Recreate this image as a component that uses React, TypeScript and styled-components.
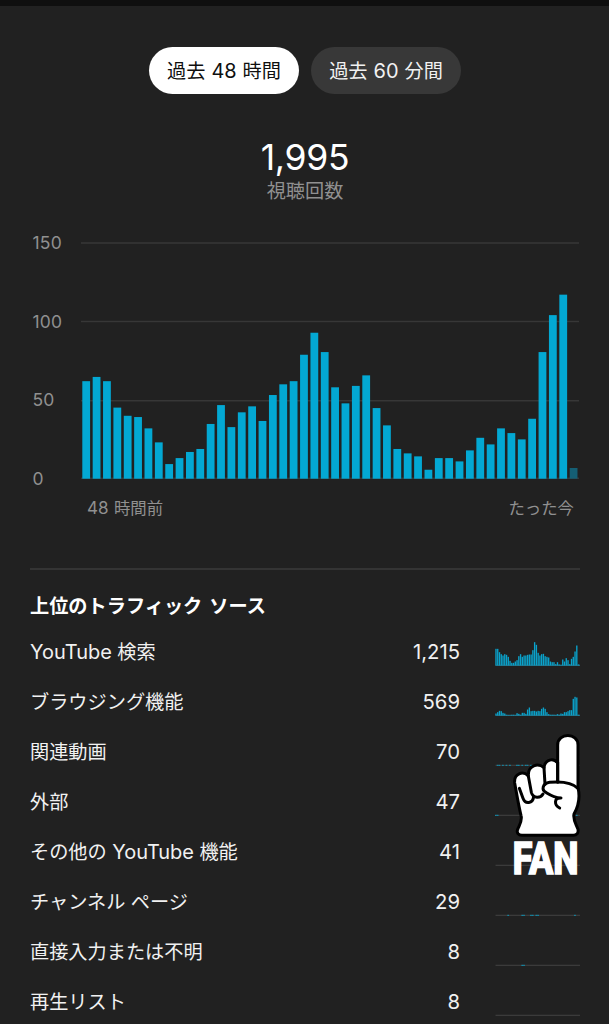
import React from 'react';
import styled, { createGlobalStyle } from 'styled-components';

const GlobalStyle = createGlobalStyle`
  * { box-sizing: border-box; }
  body {
    margin: 0;
    background: #212121;
    color: #f1f1f1;
    font-family: Inter, "Noto Sans CJK JP", sans-serif;
  }
`;

const Screen = styled.main`
  position: relative;
  height: 1024px;
  overflow: hidden;
  border-top: 6px solid #0f0f0f;
  padding: 41px 29px 0 30px;
`;

const Latin = styled.span`
  font-size: 1.04em;
  line-height: 1;
`;

const Tabs = styled.div`
  display: flex;
  justify-content: center;
  gap: 12px;
`;

const Tab = styled.button<{ $active?: boolean }>`
  width: 150px;
  height: 47px;
  padding: 0;
  border: 0;
  border-radius: 24px;
  background: ${(p) => (p.$active ? '#fff' : '#383838')};
  color: ${(p) => (p.$active ? '#0f0f0f' : '#f1f1f1')};
  font: 400 19.2px/48px Inter, "Noto Sans CJK JP", sans-serif;
  word-spacing: 0.6px;
  white-space: nowrap;
`;

const Summary = styled.section`
  display: flex;
  flex-direction: column;
  align-items: center;
  padding-top: 44px;
`;

const Total = styled.div`
  font-size: 35.5px;
  line-height: 40px;
  letter-spacing: -0.3px;
  color: #fff;
`;

const TotalLabel = styled.div`
  font-size: 19.2px;
  line-height: 26px;
  color: #909090;
`;

const ChartArea = styled.section`
  display: grid;
  grid-template-columns: 51px 498px;
  padding-top: 27px;
`;

const Axis = styled.div`
  display: flex;
  flex-direction: column;
  justify-content: space-between;
  height: 260px;
  padding-left: 2.5px;
  font-size: 17.5px;
  line-height: 24px;
  letter-spacing: 0.2px;
  color: #909090;
`;

const Plot = styled.svg`
  display: block;
  margin-top: 10px;
`;

const Times = styled.div`
  grid-column: 2;
  display: flex;
  justify-content: space-between;
  padding: 4px 5px 0 6px;
  font-size: 16.4px;
  line-height: 26px;
  word-spacing: 0.8px;
  color: #909090;
`;

const Sources = styled.section`
  margin-top: 47px;
  border-top: 2px solid #343434;
`;

const Heading = styled.h2`
  margin: 0;
  padding-top: 22px;
  font-size: 19.2px;
  line-height: 28px;
  font-weight: 700;
  word-spacing: 2.4px;
  color: #fff;
`;

const List = styled.div`
  padding-top: 10px;
`;

const Row = styled.div`
  display: grid;
  grid-template-columns: 1fr 120px 120px;
  height: 50px;
  padding-top: 7px;
  font-size: 19.2px;
  line-height: 30px;
`;

const Name = styled.span`
  white-space: nowrap;
`;

const Count = styled.span`
  font-size: 20.3px;
  text-align: right;
`;

const Spark = styled.svg`
  justify-self: end;
  margin-top: 2px;
`;

const Sticker = styled.svg`
  position: absolute;
  left: 485px;
  top: 719px;
`;

const views = [
  62, 64.7, 62, 45.2, 40, 39.2, 32, 23.1, 9.3, 13.1, 17, 18.9, 34.8, 46.8, 32.8, 42.2, 46,
  36.7, 53.2, 60, 62, 78.8, 92.8, 80.5, 58.1, 47.9, 59, 65.7, 44.9, 33.9, 18.9, 16.1, 14.2,
  5.7, 13.1, 13.1, 11, 18, 26, 21.8, 32, 29, 25, 38.1, 80.5, 104, 117, 6.8,
];

const search = [
  50, 50, 40, 34, 30, 34, 32, 26, 14, 8, 8, 12, 16, 28, 34, 26, 30, 30, 32, 33, 33, 46, 70, 62,
  38, 30, 34, 35, 28, 26, 24, 12, 10, 10, 4, 10, 3, 2, 18, 12, 22, 16, 4, 20, 26, 42, 60, 3,
];
const browse = [
  6, 10, 14, 13, 8, 6, 2, 1, 1, 2, 2, 1, 7, 5, 2, 8, 8, 5, 18, 24, 13, 14, 14, 12, 14, 13, 20,
  24, 20, 10, 4, 2, 2, 2, 1, 4, 2, 6, 5, 10, 10, 13, 16, 16, 50, 56, 54, 2,
];

type Source = { name: React.ReactNode; count: string; bars?: number[]; marks?: number[] };

const sources: Source[] = [
  { name: <><Latin>YouTube</Latin> 検索</>, count: '1,215', bars: search },
  { name: 'ブラウジング機能', count: '569', bars: browse },
  { name: '関連動画', count: '70', marks: [1, 2, 4, 6, 8, 12, 13, 15, 17, 18, 20] },
  { name: '外部', count: '47', marks: [0, 1, 46] },
  { name: <>その他の <Latin>YouTube</Latin> 機能</>, count: '41' },
  { name: 'チャンネル ページ', count: '29', marks: [7, 15, 16, 20, 21, 23, 24, 45] },
  { name: '直接入力または不明', count: '8', marks: [15, 16] },
  { name: '再生リスト', count: '8' },
];

function Sparkline({ bars = [], marks = [] }: { bars?: number[]; marks?: number[] }) {
  return (
    <Spark width="85" height="28" viewBox="0 0 85 28">
      <rect x="0.5" y="25.7" width="84.5" height="1.3" fill={bars.length ? '#2b6575' : '#3b3b3b'} />
      {bars.map((v, i) => (
        <rect key={i} x={0.3 + i * 1.757} y={26.5 - v / 3} width="1.36" height={v / 3} fill="#0aa2cb" />
      ))}
      {marks.map((i) => (
        <rect key={i} x={i * 1.757} y="25.8" width="1.76" height="1.2" fill="#15839f" />
      ))}
    </Spark>
  );
}

export default function App() {
  return (
    <>
      <GlobalStyle />
      <Screen>
        <Tabs>
          <Tab $active>過去 <Latin>48</Latin> 時間</Tab>
          <Tab>過去 <Latin>60</Latin> 分間</Tab>
        </Tabs>
        <Summary>
          <Total>1,995</Total>
          <TotalLabel>視聴回数</TotalLabel>
        </Summary>
        <ChartArea>
          <Axis>
            <span>150</span>
            <span>100</span>
            <span>50</span>
            <span>0</span>
          </Axis>
          <Plot width="498" height="240" viewBox="0 0 498 240">
            {[1.75, 80.25, 159.5, 237].map((y) => (
              <rect key={y} x="0" y={y - 0.5} width="498" height="1.5" fill="#373737" />
            ))}
            {views.map((v, i) => (
              <rect
                key={i}
                x={1.3 + i * 10.37}
                y={237.7 - v * 1.573}
                width="7.8"
                height={v * 1.573}
                fill={i === views.length - 1 ? '#155f74' : '#03a8d3'}
              />
            ))}
          </Plot>
          <Times>
            <span><Latin>48</Latin> 時間前</span>
            <span>たった今</span>
          </Times>
        </ChartArea>
        <Sources>
          <Heading>上位のトラフィック ソース</Heading>
          <List>
            {sources.map((s, i) => (
              <Row key={i}>
                <Name>{s.name}</Name>
                <Count>{s.count}</Count>
                <Sparkline bars={s.bars} marks={s.marks} />
              </Row>
            ))}
          </List>
        </Sources>
        <Sticker width="124" height="160" viewBox="0 0 372 480">
          <g fill="#fff" stroke="#000" strokeWidth="9" strokeLinejoin="round" strokeLinecap="round">
            <path d="M218 172V60C218 22 279 22 279 60V188C286 218 279 246 267 267C263 285 274 299 279 313C281 325 275 331 265 331H111C100 331 94 323 98 313C103 300 113 287 108 271C102 248 95 207 89 174C86 146 114 136 130 153C128 120 160 113 177 128C180 102 206 98 218 114Z" />
            <path d="M130 153L139 202C145 222 167 220 174 207M177 128L180 178M218 112V168" fill="none" />
            <path d="M103 190L114 220C121 239 143 236 146 215" fill="none" />
            <path d="M279 190C259 171 224 169 194 172C172 175 168 195 184 203C197 211 210 218 228 219M226 219C207 219 207 240 224 249" fill="none" />
          </g>
          <text
            x="83"
            y="448"
            textLength="197"
            lengthAdjust="spacingAndGlyphs"
            fontFamily="Roboto, sans-serif"
            fontWeight="800"
            fontSize="134"
            fill="#fff"
            stroke="#fff"
            strokeWidth="5"
          >
            FAN
          </text>
        </Sticker>
      </Screen>
    </>
  );
}
